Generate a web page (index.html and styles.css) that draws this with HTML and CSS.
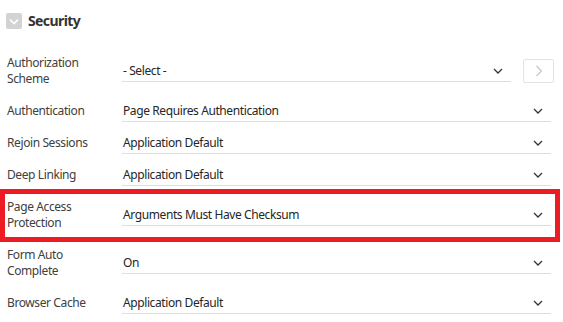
FILE: index.html
```html
<!DOCTYPE html>
<html lang="en">
<head>
  <meta charset="UTF-8">
  <meta name="viewport" content="width=device-width, initial-scale=1.0">
  <title>Security</title>
  <link rel="stylesheet" href="styles.css">
</head>
<body>
  <div class="region-header">
    <span class="toggle">
      <svg width="16" height="16" viewBox="0 0 16 16"><path d="M4 6.5 L8 10.5 L12 6.5" fill="none" stroke="#fff" stroke-width="1.6"/></svg>
    </span>
    <h2>Security</h2>
  </div>

  <!-- form rows -->
  <div class="row">
    <label>Authorization Scheme</label>
    <div class="field">
      <span class="select">- Select -<svg class="chev" width="10" height="6" viewBox="0 0 10 6"><path d="M1 1 L5 5 L9 1" fill="none" stroke="#333" stroke-width="1.3"/></svg></span>
      <button class="go"><svg width="8" height="12" viewBox="0 0 8 12"><path d="M1.5 1 L6.5 6 L1.5 11" fill="none" stroke="#c4c4c4" stroke-width="1.1"/></svg></button>
    </div>
  </div>
  <div class="row">
    <label>Authentication</label>
    <div class="field">
      <span class="select">Page Requires Authentication<svg class="chev" width="10" height="6" viewBox="0 0 10 6"><path d="M1 1 L5 5 L9 1" fill="none" stroke="#333" stroke-width="1.3"/></svg></span>
    </div>
  </div>
  <div class="row">
    <label>Rejoin Sessions</label>
    <div class="field">
      <span class="select">Application Default<svg class="chev" width="10" height="6" viewBox="0 0 10 6"><path d="M1 1 L5 5 L9 1" fill="none" stroke="#333" stroke-width="1.3"/></svg></span>
    </div>
  </div>
  <div class="row">
    <label>Deep Linking</label>
    <div class="field">
      <span class="select">Application Default<svg class="chev" width="10" height="6" viewBox="0 0 10 6"><path d="M1 1 L5 5 L9 1" fill="none" stroke="#333" stroke-width="1.3"/></svg></span>
    </div>
  </div>
  <div class="row highlight">
    <label>Page Access Protection</label>
    <div class="field">
      <span class="select">Arguments Must Have Checksum<svg class="chev" width="10" height="6" viewBox="0 0 10 6"><path d="M1 1 L5 5 L9 1" fill="none" stroke="#333" stroke-width="1.3"/></svg></span>
    </div>
  </div>
  <div class="row">
    <label>Form Auto Complete</label>
    <div class="field">
      <span class="select">On<svg class="chev" width="10" height="6" viewBox="0 0 10 6"><path d="M1 1 L5 5 L9 1" fill="none" stroke="#333" stroke-width="1.3"/></svg></span>
    </div>
  </div>
  <div class="row">
    <label>Browser Cache</label>
    <div class="field">
      <span class="select">Application Default<svg class="chev" width="10" height="6" viewBox="0 0 10 6"><path d="M1 1 L5 5 L9 1" fill="none" stroke="#333" stroke-width="1.3"/></svg></span>
    </div>
  </div>
</body>
</html>
```

FILE: styles.css
```css
body { margin:0; background:#fff; font-family:"Noto Sans", "Open Sans", sans-serif; font-size:12px; letter-spacing:-0.4px; color:#262626; }
.region-header { display:flex; align-items:center; gap:6px; padding:13px 6px 18px; height:16px; }
.toggle { width:16px; height:16px; background:#d3d3d3; border-radius:2px; display:flex; }
.region-header h2 { margin:0; font-size:14px; font-weight:bold; letter-spacing:-0.6px; color:#333; line-height:16px; }
.row { display:flex; align-items:center; }
.row label { width:122px; padding:8px 12px 8px 7px; line-height:16px; color:#404040; box-sizing:border-box; flex:none; }
.field { display:flex; align-items:center; gap:12px; width:429px; }
.select { flex:1; display:flex; align-items:center; justify-content:space-between; height:22px; line-height:22px; border-bottom:1px solid #dedede; box-sizing:border-box; padding:0 8px 0 1px; }
.chev { flex:none; }
.go { width:31px; height:24px; border:1px solid #e3e3e3; border-radius:2px; background:#fff; display:flex; align-items:center; justify-content:center; padding:0; margin-right:-3px; }
.highlight { position:relative; }
.highlight::after { content:""; position:absolute; left:0; right:3px; top:-2px; bottom:-3px; border:5px solid #ed1c24; }
```
